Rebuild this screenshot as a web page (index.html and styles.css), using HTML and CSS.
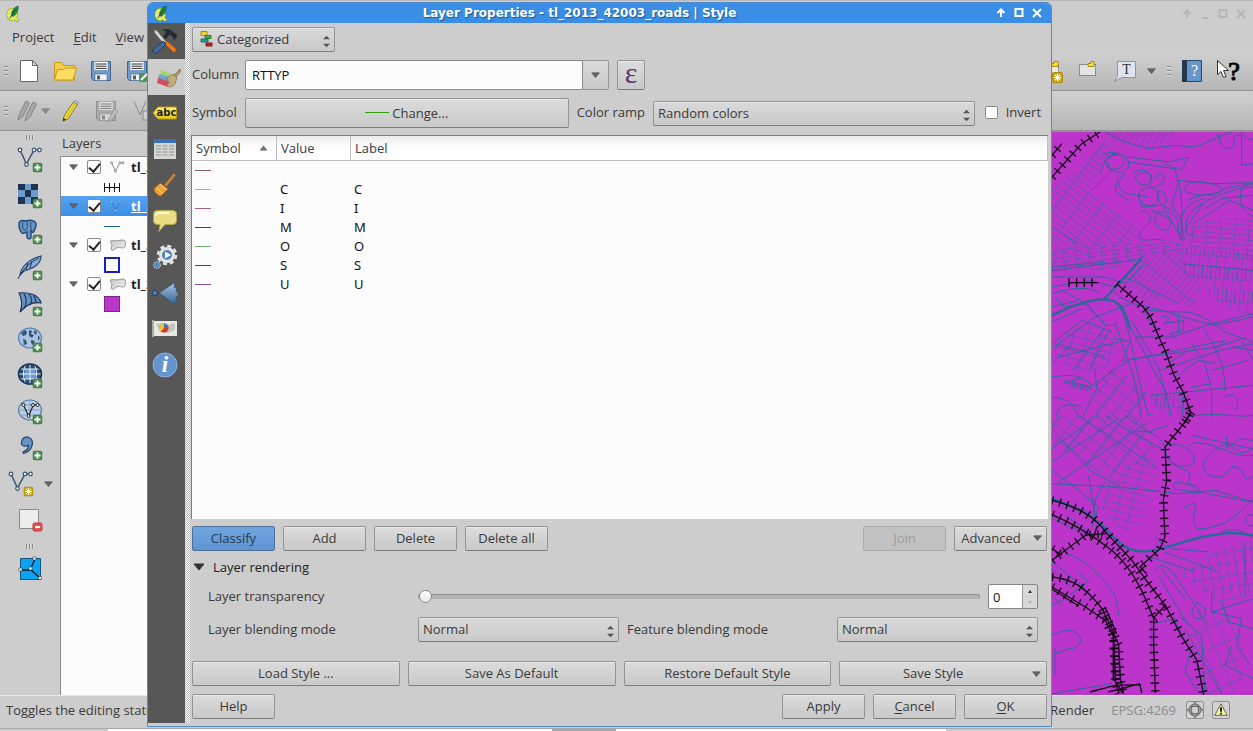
FILE: index.html
```html
<!DOCTYPE html>
<html lang="en">
<head>
<meta charset="utf-8">
<title>Layer Properties</title>
<link rel="stylesheet" href="styles.css">
</head>
<body>
<svg class="defs" aria-hidden="true">
  <defs>
    <linearGradient id="blueg" x1="0" y1="0" x2="0" y2="1"><stop offset="0" stop-color="#a9c8e8"/><stop offset="1" stop-color="#33618f"/></linearGradient>
    <linearGradient id="yel" x1="0" y1="0" x2="0" y2="1"><stop offset="0" stop-color="#fdf66a"/><stop offset="1" stop-color="#e3c51c"/></linearGradient>
    <linearGradient id="grey" x1="0" y1="0" x2="1" y2="1"><stop offset="0" stop-color="#c4c4c4"/><stop offset="1" stop-color="#f4f4f4"/></linearGradient>
    <symbol id="plus" viewBox="0 0 10 10"><rect x=".5" y=".5" width="9" height="9" rx="1.5" fill="#4f8f51" stroke="#3f7741"/><path d="M5 2v6M2 5h6" stroke="#fff" stroke-width="1.8"/></symbol>
    <symbol id="star" viewBox="0 0 10 10"><rect x=".5" y=".5" width="9" height="9" rx="1.5" fill="#cfa819" stroke="#a98a12"/><path d="M5 1.6v6.8M1.6 5h6.8M2.6 2.6l4.8 4.8M7.4 2.6L2.6 7.4" stroke="#fff" stroke-width="1"/></symbol>
    <symbol id="vee" viewBox="0 0 26 22"><path d="M3 3l6.500 14L17 3h5" fill="none" stroke="currentColor" stroke-width="1.500"/><g fill="#e8eef4" stroke="currentColor" stroke-width="1.200"><circle cx="3" cy="3" r="1.800"/><circle cx="9.500" cy="17.500" r="1.800"/><circle cx="17" cy="3" r="1.800"/><circle cx="22.500" cy="3" r="1.800"/></g></symbol>
    <symbol id="poly" viewBox="0 0 18 14"><path d="M2 2c2-1 3 0 6 0s7-2 9 0 0 4 0 6c-1 3-4 1-7 1s-5 4-7 3 0-3 0-5-3-4-1-5z" fill="url(#grey)" stroke="#8c8c8c"/></symbol>
    <symbol id="q" viewBox="0 0 16 18"><ellipse cx="6.500" cy="10" rx="4" ry="5" fill="none" stroke="#7d9a2a" stroke-width="4"/><path d="M8 12l5 5" stroke="#7d9a2a" stroke-width="3.500"/><ellipse cx="6.500" cy="10" rx="4" ry="5" fill="#cfdcae" stroke="#e2ef55" stroke-width="2.800"/><path d="M8 12l4.500 4.500" stroke="#e2ef55" stroke-width="2.500"/><path d="M6 11C6 6 8 3 13 1c0 5-1 8-5 11z" fill="#2a8a45" stroke="#124f26" stroke-width=".7"/><path d="M4 14l7-10" stroke="#124f26" stroke-width="1"/></symbol>
    <symbol id="tri" viewBox="0 0 10 7"><path d="M.5 1h9L5 6.500z" fill="#666" stroke="#4c4c4c" stroke-width=".8"/></symbol>
    <symbol id="updown" viewBox="0 0 8 14"><path d="M0 4.500L4 .5l4 4zM0 9.500L4 13.500l4-4z" fill="#555"/></symbol>
    <symbol id="floppy" viewBox="0 0 24 24"><path d="M2.500 2.500h19v19h-17l-2-2z" fill="#6f9acb" stroke="#3f648e"/><rect x="5" y="2.500" width="14" height="9" fill="#fafafa" stroke="#5b7fa8" stroke-width=".6"/><path d="M6.500 5h11M6.500 7.200h11M6.500 9.400h11" stroke="#333" stroke-width="1"/><rect x="6" y="15" width="12" height="6.500" fill="#f2f2f2" stroke="#49688c" stroke-width=".6"/><rect x="8" y="16.500" width="3" height="4" fill="#4d5a68"/></symbol>
    <symbol id="globe" viewBox="0 0 26 22"><ellipse cx="13" cy="11" rx="11.500" ry="10" fill="currentColor" stroke="#5480ae" stroke-width="1.200"/></symbol>
  </defs>
</svg>

<div class="main-window">
  <header class="main-title">
    <svg class="logo"><use href="#q"/></svg>
    <span class="grow"></span>
    <svg class="winbtns faded" viewBox="0 0 72 18"><path d="M9 13V6M5.500 9L9 5.500 12.500 9" /><path d="M24 13h6"/><rect x="41.500" y="5" width="7" height="7"/><path d="M59 5l8 8M67 5l-8 8"/></svg>
  </header>
  <nav class="menubar">
    <a href="#">Pro<u>j</u>ect</a><a href="#"><u>E</u>dit</a><a href="#"><u>V</u>iew</a>
  </nav>
  <div class="toolbar">
    <span class="grip"></span>
    <button class="tool" aria-label="New project"><svg viewBox="0 0 24 24"><path d="M3.500 1.500h12l5 5v16h-17z" fill="#fff" stroke="#666"/><path d="M15.500 1.500v5h5z" fill="#ddd" stroke="#666"/></svg></button>
    <button class="tool" aria-label="Open project"><svg viewBox="0 0 24 24"><path d="M1.500 21V3.500h7l2 3h11V21z" fill="#f4cf4c" stroke="#c99a18"/><path d="M1.500 21L4.500 10.500h6l2-1.500h11L20 21z" fill="#ffdc62" stroke="#c99a18"/></svg></button>
    <button class="tool" aria-label="Save project"><svg viewBox="0 0 24 24"><use href="#floppy"/></svg></button>
    <button class="tool" aria-label="Save project as"><svg viewBox="0 0 24 24"><use href="#floppy"/><rect x="14" y="14" width="9" height="9" rx="1" fill="#4f8f61"/><path d="M16 21l6-6" stroke="#fff" stroke-width="2"/></svg></button>
    <span class="grow"></span>
    <button class="tool" aria-label="New bookmark"><svg viewBox="0 0 24 24"><path d="M2.500 5.500h15v13h-15z" fill="#e8e8e8" stroke="#555" stroke-dasharray="1 1"/><path d="M13 2.500h4v5h-6v-3h2z" fill="#f6e23a" stroke="#a98a12"/><use href="#star" x="11" y="13" width="11" height="11"/></svg></button>
    <button class="tool" aria-label="Show bookmarks"><svg viewBox="0 0 24 24"><path d="M2.500 5.500h16v11h-16z" fill="#e4e4e4" stroke="#444" stroke-dasharray="1 1"/><path d="M14 2.500h3v5h-6v-3h3z" fill="#f6e23a" stroke="#a98a12"/></svg></button>
    <button class="tool" aria-label="Text annotation"><svg viewBox="0 0 24 24"><path d="M4.500 2.500h18v16H9l-8 4 3.500-5z" fill="#dde6ee" stroke="#8797a6"/><text x="13.500" y="15" class="annot">T</text></svg></button>
    <button class="arrow" aria-label="More annotations"><svg class="small"><use href="#tri"/></svg></button>
    <span class="grip"></span>
    <button class="tool" aria-label="Help contents"><svg viewBox="0 0 24 24"><path d="M2.500 1.500h19v21h-19z" fill="#6596cc" stroke="#2c4767"/><path d="M2 1h5v22H2z" fill="#24374d"/><text x="14.500" y="17" class="bookq">?</text></svg></button>
    <button class="tool whats" aria-label="What's this"><svg viewBox="0 0 24 24"><path d="M1.500 1.500v14l3.500-3 2.500 6 2.500-1-2.500-6h5z" fill="#fff" stroke="#333"/><text x="18" y="21" class="whatq">?</text></svg></button>
  </div>
  <div class="toolbar">
    <span class="grip"></span>
    <button class="tool wide" aria-label="Current edits"><svg viewBox="0 0 24 24"><g fill="#a8a8a8" stroke="#848484"><path d="M2 21l1.500-6L10 2l3.500 2L7 17z"/><path d="M9 22l1.500-6L17 3l3.500 2L14 18z"/></g></svg><svg class="dim small"><use href="#tri"/></svg></button>
    <button class="tool" aria-label="Toggle editing"><svg viewBox="0 0 24 24"><path d="M5 22l1-5 9.500-14 4 2.500L10 20z" fill="#f2dc3d" stroke="#8b7a1c"/><path d="M8 18.500L17.500 4.500" stroke="#c2ab22"/><path d="M15.500 3l4 2.500 1-2.500-3-1.500z" fill="#ccc" stroke="#777" stroke-width=".7"/><path d="M5 22l.5-3 2.500 1.500z" fill="#222"/></svg></button>
    <button class="tool" aria-label="Save layer edits"><svg class="washed" viewBox="0 0 24 24"><use href="#floppy"/><path d="M14 23l1-4 6-9 3 2-6 9z" fill="#bbb" stroke="#777"/></svg></button>
    <button class="tool" aria-label="Add feature"><svg class="washed" viewBox="0 0 24 24"><path d="M4 2l6 14 6-14" fill="none" stroke="#555"/><rect x="13" y="12" width="8" height="9" fill="#ddd" stroke="#555"/></svg></button>
  </div>

  <div class="workspace">
    <aside class="side-tools">
      <span class="grip flat"></span>
      <button class="vtool" aria-label="Add vector layer"><svg viewBox="0 0 26 26"><use href="#vee" width="26" height="22"/><use href="#plus" x="15.500" y="15.500" width="10" height="10"/></svg></button>
      <button class="vtool" aria-label="Add raster layer"><svg viewBox="0 0 26 26"><path d="M1 1h20v20H1z" fill="#6c9bcd"/><path d="M1 1h7v6H1zM14 1h7v6h-7zM8 7h6v7H8zM1 14h7v7H1zM14 14h7v7h-7z" fill="#1d3552"/><use href="#plus" x="15.500" y="15.500" width="10" height="10"/></svg></button>
      <button class="vtool" aria-label="Add PostGIS layer"><svg viewBox="0 0 26 26"><path d="M2 5c0-4 4-4 7-3 3-1 5-1 7 0 3 0 4 3 2 8-1 3-2 4-3 3l-1-2v7c0 3-4 2-4 0v-5c-3 1-4 2-5 1C3 12 2 8 2 5z" fill="#6794c6" stroke="#24486f" stroke-width="1.400"/><path d="M6 3c-1 4 0 8 2 8s3-3 2-8M14 3c-1 3 0 6 1 8" fill="none" stroke="#24486f"/><use href="#plus" x="15.500" y="15.500" width="10" height="10"/></svg></button>
      <button class="vtool" aria-label="Add SpatiaLite layer"><svg viewBox="0 0 26 26"><path d="M3 20C4 12 12 4 24 1c0 7-6 12-17 15z" fill="#87aedb" stroke="#24486f" stroke-width="1.200"/><path d="M1 24C6 14 13 7 22 3M9 15l2-7M13 13l2-7" fill="none" stroke="#1d3552"/><use href="#plus" x="15.500" y="15.500" width="10" height="10"/></svg></button>
      <button class="vtool" aria-label="Add MSSQL layer"><svg viewBox="0 0 26 26"><path d="M2 2c8-1 20 1 22 10-6-1-14 1-21 9 3-7 2-13-1-19z" fill="#6794c6" stroke="#1d3552" stroke-width="1.200"/><path d="M7 2.500c3 5 3 10 0 15M12 3c3 4 3 8 1 11M17 5c2 3 2 5 2 7" fill="none" stroke="#1d3552" stroke-width="1.200"/><use href="#plus" x="15.500" y="15.500" width="10" height="10"/></svg></button>
      <button class="vtool" aria-label="Add WMS layer"><svg viewBox="0 0 26 26"><g color="#a8c3e2"><use href="#globe" width="26" height="22"/></g><path d="M4 6l4-3 2 2-1 3-3 1zM12 3l3 1-1 3 3 1-2 3-3-2zM17 3l3 2-1 3-2-2zM6 12l3 1 1 4-3 1zM14 13l4 1-2 4-2-2zM21 8l2 3-2 3z" fill="#35557c"/><use href="#plus" x="15.500" y="15.500" width="10" height="10"/></svg></button>
      <button class="vtool" aria-label="Add WCS layer"><svg viewBox="0 0 26 26"><g color="#27496f"><use href="#globe" width="26" height="22"/></g><path d="M8 6h10l1 5-1 5H8l-1-5z" fill="#6c9bcd"/><path d="M3 6h20M2 11h22M3 16h20M9 1.500C5.500 7 5.500 15 9 20.500M17 1.500c3.500 5.500 3.500 13.500 0 19M13 1v20" fill="none" stroke="#e9f1f9"/><ellipse cx="13" cy="11" rx="11.500" ry="10" fill="none" stroke="#1d3552" stroke-width="1.500"/><use href="#plus" x="15.500" y="15.500" width="10" height="10"/></svg></button>
      <button class="vtool" aria-label="Add WFS layer"><svg viewBox="0 0 26 26"><g color="#bdcfe2"><use href="#globe" width="26" height="22"/></g><path d="M3 6h20M2 11h22M3 16h20M13 1v20" stroke="#7fa3ca" fill="none"/><path d="M6.500 6l5 11 5-11h4" fill="none" stroke="#222" stroke-width="1.200"/><g fill="#fff" stroke="#222"><circle cx="6.500" cy="6" r="1.500"/><circle cx="11.500" cy="17" r="1.500"/><circle cx="16" cy="6" r="1.500"/><circle cx="20.500" cy="6" r="1.500"/></g><use href="#plus" x="15.500" y="15.500" width="10" height="10"/></svg></button>
      <button class="vtool" aria-label="Add delimited text layer"><svg viewBox="0 0 26 26"><path d="M10 11C5 12 4 9 4.500 6.500 5 3 9 1 12 2.500c6 3 4 13-5.500 16l-.5-1.500c4-2 6-4 5.500-7z" fill="#6794c6" stroke="#24486f" stroke-width="1.200"/><use href="#plus" x="15.500" y="15.500" width="10" height="10"/></svg></button>
      <span class="vrow"><button class="vtool" aria-label="New vector layer"><svg viewBox="0 0 26 26"><use href="#vee" width="26" height="22"/><use href="#star" x="15.500" y="15.500" width="10" height="10"/></svg></button><svg class="small"><use href="#tri"/></svg></span>
      <button class="vtool" aria-label="Remove layer"><svg viewBox="0 0 26 26"><path d="M2.500 2.500h19v19h-19z" fill="#ededeb" stroke="#8a8a8a"/><rect x="16" y="16" width="9" height="8" rx="1.500" fill="#e05454" stroke="#c33"/><path d="M18 20h5" stroke="#fff" stroke-width="2"/></svg></button>
      <span class="grip flat low"></span>
      <button class="vtool" aria-label="Topology"><svg viewBox="0 0 26 26"><path d="M3.500 2.500h20v21h-20z" fill="#0aa5f2" stroke="#17527a"/><path d="M3 14h10L18 3M13 13l10 9" stroke="#111" stroke-width="1.300" fill="none"/><g fill="#fff" stroke="#333" stroke-width=".6"><path d="M2 12h3v3H2zM12 11h3v3h-3zM16 1h3v3h-3zM21.500 20.500h3v3h-3z"/></g></svg></button>
    </aside>

    <section class="layers">
      <h2>Layers</h2>
      <ul class="tree">
        <li class="layer"><svg class="small"><use href="#tri"/></svg><input type="checkbox" checked aria-label="Show rails layer"><svg class="ltype thin"><use href="#vee"/></svg><b>tl_2</b></li>
        <li class="legend"><svg viewBox="0 0 16 10"><path d="M0 5.500h16M.5 1v9M5.500 1v9M10.500 1v9M15.500 1v9" stroke="#111" fill="none"/></svg></li>
        <li class="layer selected"><svg class="small"><use href="#tri"/></svg><input type="checkbox" checked aria-label="Show roads layer"><svg class="ltype thin sel"><use href="#vee"/></svg><b>tl_2</b></li>
        <li class="legend"><svg viewBox="0 0 16 10"><path d="M0 5.500h16" stroke="#1f6a96"/></svg></li>
        <li class="layer"><svg class="small"><use href="#tri"/></svg><input type="checkbox" checked aria-label="Show outline layer"><svg class="ltype"><use href="#poly"/></svg><b>tl_2</b></li>
        <li class="legend"><i class="swatch outline"></i></li>
        <li class="layer"><svg class="small"><use href="#tri"/></svg><input type="checkbox" checked aria-label="Show area layer"><svg class="ltype"><use href="#poly"/></svg><b>tl_2</b></li>
        <li class="legend"><i class="swatch fill"></i></li>
      </ul>
    </section>

    <div class="map">
      <svg viewBox="0 0 603 1692" preserveAspectRatio="xMaxYMin slice" role="img" aria-label="Map of roads and railways">
        <defs>
          <pattern id="g1" width="54" height="18" patternUnits="userSpaceOnUse" patternTransform="rotate(37)"><path d="M0 0h54M0 0v18" class="road"/></pattern>
          <pattern id="g2" width="17" height="60" patternUnits="userSpaceOnUse" patternTransform="rotate(28)"><path d="M0 0v60" class="road"/></pattern>
          <pattern id="g3" width="42" height="15" patternUnits="userSpaceOnUse" patternTransform="rotate(4)"><path d="M0 0h42M0 0v15" class="road"/></pattern>
          <pattern id="g4" width="26" height="66" patternUnits="userSpaceOnUse" patternTransform="rotate(5)"><path d="M0 0h26M0 0v66M13 30v36" class="road"/></pattern>
          <pattern id="g5" width="38" height="24" patternUnits="userSpaceOnUse" patternTransform="rotate(-8)"><path d="M0 0h38M0 0v24M0 12h19" class="road"/></pattern>
          <pattern id="g6" width="56" height="16" patternUnits="userSpaceOnUse" patternTransform="rotate(-50)"><path d="M0 0h56M0 0v16" class="road"/></pattern>
          <pattern id="g7" width="76" height="32" patternUnits="userSpaceOnUse" patternTransform="rotate(38)"><path d="M0 0h76M0 0v32M38 0v32" class="road"/></pattern>
          <pattern id="g8" width="40" height="22" patternUnits="userSpaceOnUse" patternTransform="rotate(15)"><path d="M0 0h40M0 0v22" class="road"/></pattern>
          <pattern id="g9" width="26" height="70" patternUnits="userSpaceOnUse" patternTransform="rotate(-9)"><path d="M0 0h26M0 0v70M0 35h13" class="road"/></pattern>
          <pattern id="g10" width="36" height="60" patternUnits="userSpaceOnUse" patternTransform="rotate(-24)"><path d="M0 0h36M0 0v60" class="road"/></pattern>
        </defs>
        <rect width="603" height="1692" fill="#bb35cb"/>
        <g transform="translate(-21 -5)">
          <path d="M21 165L100 120 180 30 210 40 130 180 250 270 300 330 180 345 21 350V310L100 330 21 270z" fill="url(#g1)"/>
          <path d="M205 5h190l-30 30-30 18-90-5-50-20z" fill="url(#g2)"/>
          <path d="M440 290l40-20 144-10v120l-190-25z" fill="url(#g3)"/>
          <path d="M408 350l216 20v190l-90-30-126-110z" fill="url(#g4)"/>
          <path d="M21 355l160-15 235-5-5 30-120 15-90 35-180 10z" fill="url(#g5)"/>
          <path d="M290 385l120-35 0 55 60 70-30 60-90-40-30 35-80-60z" fill="url(#g6)"/>
          <path d="M60 610l60-30 115 45-60 100-100-5-50-60z" fill="url(#g8)"/>
          <path d="M320 795h110v60h-90z" fill="url(#g4)"/>
          <path d="M145 770l60-60 110 80-50 75h-110z" fill="url(#g7)"/>
          <g class="road">
            <path d="M180 5l60 30 70 20 80-10 60 5 60-25 50-20M520 10c5 40 20 50 40 40s-10-30 20-35 20 20 44 10M590 5v100l34-5M170 75c20-15 60-10 75 10s0 45-30 40-40-30-20-45 50-5 40 20-50 20-45 0M245 80l130 15 55-15-20 40-50-20M250 95l140 20 10 45-20 60 30 50v60"/>
            <path d="M165 130c10-30 20-60 50-60M140 180l60-60M240 130c-30 30-20 50 10 60l60 10M265 130c20-20 50-10 55 10s-20 30-35 20-20-25 0-30 40 0 30 20M330 145c10-25 35-15 25 5s-30 30-45 10M290 180c-20 20-5 40 20 45s40-20 25-40-30-15-45-5M340 180c-10 30 10 50 20 40s0-40-20-40zM280 190l10 40 60-5 40 20M360 225c-20 30 40 10 40 60s20 40 15 50M320 240l60 30 30 60M280 250c20-20 40 0 35 20s-40 30-30 50 40 0 70 10M220 140l-10 40 40 30M340 245c30 0 50 30 30 50s-60-30-30-50"/>
            <path d="M400 150l110 10 114-3M400 150c20 60 0 130 20 180M420 180c0-20 20-30 50-25s80 15 55 30-100 10-105-5zM430 210c30-20 80-15 100-30s60-10 94-20M410 290c-10-50 30-80 70-85M425 310c-10-40 10-70 50-90l-50 70c-10 20 10 40 30 5M624 240l-70-30-110 70M480 235l50-30 94-10M600 160c-30 40-10 80 24 100M440 240c60-40 130-70 184-70"/>
            <path d="M21 290l80 50M21 410l160-15M21 420l250-30 30-15M21 440h160l60 20 60-60M200 480l90-100M205 480c10 20 40 30 60 40l90 20 40 15 110 30 119-25M21 470l110-20 80 20M21 490c60-20 110-20 140-5M21 575l90-40M60 485l70 40 50 60h30M30 500l30 30 60-10 60 60M21 530l80-20M240 440l160 80M410 400l214 20M310 540l80 5 40 0c60 15 80 40 110 60l84 30"/>
            <path d="M21 655L150 560l110-40M21 640l90-70 90 35M30 640l150 40M40 680l180-45M21 700l60-60M195 595l-60 120M180 590l-95 130M215 625l40 10-20 50-80 80M235 690l280-40 90-30M270 620h110l120-40 124-30M220 525c30 30 50 200 90 330l15-5M240 560l130 240M210 575c40 130 60 150 80 290M260 570l80 140 40 150M300 545l60 110M345 720l180-60 99-20M21 740c60-10 90-5 120 25l110-75 290-60M60 755l80 20M60 750l80 20M55 760l60-20M70 765l60 15"/>
            <path d="M21 800c40 5 60 10 80 60M35 860c0-50 70-40 75-25M115 855l40-80-5-60M315 795l309-30M350 560c20-10 30 15 5 20l60-10v30l-40 10 20 15M400 550v60M480 600c30 50 60 100 60 180M440 640l40 60 20 80M510 670c20-40 30-35 30-30M440 770l60-10M500 720l110-30M540 800c30-20 50 10 30 40M590 630l34 60M420 780l-10 85M500 780v80M430 860c80-20 150 5 194-5M560 650l64 10M370 700l60-40M390 740l70-50 50 10"/>
          </g>
          <path d="M21 555c50-25 110-50 160-48s60 40 75 90M175 510l115-125" class="highway"/>
          <g class="rail"><path d="M21 140L110 40 165 5M21 75l30-35M70 457h90M215 460l80 70 22 30 25 60 20 45 25 70 25 45 25 65-20 35"/></g>
          <g class="ties"><path d="M21 140L110 40 165 5M21 75l30-35M70 457h90M215 460l80 70 22 30 25 60 20 45 25 70 25 45 25 65-20 35"/></g>
        </g>
        <g transform="translate(-21 850)">
          <path d="M21 0h260l50 100-120 100-190-110z" fill="url(#g7)"/>
          <path d="M200 190l90-80 45 20-50 200-60 20-60-80z" fill="url(#g8)"/>
          <path d="M520 400l104-30v170l-110 20-110-80z" fill="url(#g9)"/>
          <path d="M440 600l90-40 60 140v136H480l-60-60z" fill="url(#g10)"/>
          <g class="road">
            <path d="M21 40l120 130 80 40M21 100L160 0M21 140L220 10M40 200L310 20M21 205l200 10 180 20 110-10 113 35M100 0l240 160M180 0l60 40 110 60M240 0l70 50 60-20M21 165l80 60 60 50-20 60M130 180l20 120M180 200c-20 30-40 60-30 110M270 50c40-10 80 10 90 50s20 60 70 50-10-80-70-60"/>
            <path d="M624 100c-60 40-50-40-110 0s-40 80 0 85 30-40 60-30 20 60 50 25M430 90c60-30 120 40 194 30M545 60v40l40-30 39 5M440 60l180 40M370 120c30 60 80 30 60 80l30 30 164 30M385 210c5-20 40 0 60 0s30 30 0 20-60 0-60-20zM415 280c80-60-10 70 60 60s90-30 149-90M624 300c-40-10-20 40 0 30M530 350c60-20 70 10 94 15M380 400l110 10M300 420l150 50M360 410l160 60M330 360l30 40"/>
            <path d="M330 470c10-30 40-20 60 10l100 150M340 480l90 150M350 460l70 90M450 560c40 10 40 50 10 50s-20-40 0-50M400 600l70 60 10 176M420 640l110 196M330 625l60-15M500 530v60l124-40M500 590l90 20-15 80 40 60M530 560l20 60 74 20M600 380v160M440 690l-20 80 40 60M560 690l-20 60 84 40"/>
            <path d="M60 415c60 10 120 80 150 125l12 60M21 440l100 80M21 460l60 60M100 470l30 30-60 40M21 540l30 30M21 660c60-30 80-5 85 10s-10 30-30 30-35 20-50 10M21 835l180-30M30 700v80M21 310l110 50M60 300l90 60M21 570l40-20"/>
            <path d="M320 610v110M205 650l5 150M385 600l50 110M30 255l90 30 60 50M225 745v60"/>
          </g>
          <path d="M21 250c80 30 120 50 160 90s60 70 120 68 100-30 180-45 90-10 143-3" class="highway"/>
          <g class="rail"><path d="M440-10l-20 30-60 75 5 100-10 60 5 110-15 35-60 55 20 20"/><path d="M21 255c80 20 130 50 165 100l75 80 50 70 50 65 50 95 45 70 20 105"/><path d="M21 298c90 40 130 70 170 100s70 70 100 130l35 80v80l5 145M325 608l38-40"/><path d="M21 435l100-75 60-5M21 400l30 20"/><path d="M21 485c60 5 100 30 150 95l30 60 20 50 5 100 10 45M21 515l100 60 60 40 25 50 5 130 10 40M21 522l80 50M180 575l35 80M205 650v140l30 45M135 830l75-20 75-2 5 25M190 830l95-25"/></g>
          <g class="ties"><path d="M440-10l-20 30-60 75 5 100-10 60 5 110-15 35-60 55 20 20"/><path d="M21 255c80 20 130 50 165 100l75 80 50 70 50 65 50 95 45 70 20 105"/><path d="M21 298c90 40 130 70 170 100s70 70 100 130l35 80v80l5 145M325 608l38-40"/><path d="M21 435l100-75 60-5M21 400l30 20"/><path d="M21 485c60 5 100 30 150 95l30 60 20 50 5 100 10 45M21 515l100 60 60 40 25 50 5 130 10 40"/><path d="M150 345l35 12 75 78 50 72M175 590l30 70 10 150"/></g>
        </g>
      </svg>
    </div>
  </div>

  <footer class="status">
    <span class="hint">Toggles the editing state</span>
    <span class="grow"></span>
    <span>Render</span>
    <span class="epsg">EPSG:4269</span>
    <button class="sbtn" aria-label="CRS status"><svg viewBox="0 0 18 18"><g fill="none" stroke="#6c6c6c" stroke-width="1.500"><circle cx="9" cy="9" r="6.500"/><rect x="5" y="5" width="8" height="8" rx="2"/></g><path d="M9 0v4M9 14v4M0 9h4M14 9h4" stroke="#888" stroke-width="3"/></svg></button>
    <button class="sbtn" aria-label="Messages"><svg viewBox="0 0 18 18"><path d="M9 2l7 13H2z" fill="#f7f3a4" stroke="#555"/><path d="M9 6v5M9 12v2" stroke="#111" stroke-width="2"/></svg></button>
  </footer>
</div>
<div class="desk-strip"><i></i><i class="w"></i><i class="g"></i><i class="w b"></i></div>

<div class="dialog" role="dialog" aria-labelledby="dlg-title">
  <header class="dlg-title">
    <svg class="logo"><use href="#q"/></svg>
    <h1 id="dlg-title">Layer Properties - tl_2013_42003_roads | Style</h1>
    <svg class="winbtns" viewBox="0 0 54 18"><path d="M9 13V6M5.500 9L9 5.500 12.500 9"/><rect x="23.500" y="5" width="7" height="7"/><path d="M41 5l8 8M49 5l-8 8"/></svg>
  </header>
  <div class="dlg-body">
    <nav class="tabs">
      <button aria-label="General"><svg viewBox="0 0 26 26"><path d="M2 2l3 1 9 11-2 2L3 5z" fill="#ddd" stroke="#888" stroke-width=".6"/><path d="M15 13l9 8c1 2-2 4-3 3l-8-8z" fill="#f0791c" stroke="#b4500b"/><path d="M10 2c5-2 9-1 11 2l4 2c0 3-1 5-3 6l-2-4-3-1-3 4-3-2 3-5c-1-1-2-2-4-2z" fill="#222c33"/><path d="M11 13l3 3-9 9c-2 1-5-1-4-3z" fill="#3f689c" stroke="#223f66"/></svg></button>
      <button class="on" aria-label="Style"><svg viewBox="0 0 26 26"><path d="M6 6l13 5-4 5L5 11z" fill="#a3d36c"/><path d="M4 10l14 4-3 5L3 15z" fill="#6aa5d4"/><path d="M3 14l13 4-3 5L2 19z" fill="#d34c5c"/><path d="M12 14l6-4 4 4-2 6c-3 4-6 3-9 2l3-3z" fill="#c0ab7d" stroke="#8c7a50" stroke-width=".8"/><path d="M19 11l6-6 1 2-5 6z" fill="#b49a68" stroke="#8c7a50"/></svg></button>
      <button aria-label="Labels"><svg viewBox="0 0 26 26"><path d="M1 13l5-6h17.500q1 0 1 1v10q0 1-1 1H6z" fill="url(#yel)" stroke="#b89b10"/><text x="14.500" y="16" class="abc">abc</text></svg></button>
      <button aria-label="Fields"><svg viewBox="0 0 26 26"><path d="M2 3h22v20H2z" fill="#d4d6d2"/><path d="M2 3h22v4H2z" fill="#3c73b8"/><path d="M4 10h18M4 13h18M4 16h18M4 19h18" stroke="#8f938c" stroke-width="1.200" stroke-dasharray="5 1.500"/></svg></button>
      <button aria-label="Rendering"><svg viewBox="0 0 26 26"><path d="M22 3l-8 10" stroke="#c9832b" stroke-width="2.800" stroke-linecap="round"/><path d="M8 11l8 6-7 7c-3 0-7-4-7-7z" fill="#efa33d" stroke="#a8661a"/><path d="M5 16l6 6M8 12l7 6" stroke="#ffd692"/></svg></button>
      <button aria-label="Display"><svg viewBox="0 0 26 26"><path d="M5 2.500h15q4.500 0 4.500 4v6q0 4-4.500 4h-7l-6 7 1-7H6q-4.500 0-4.500-4v-6q0-4 3.500-4z" fill="#e8dc84" stroke="#b5a84b"/><path d="M4 8q0-3 4-3h9" stroke="#fbf8d8" fill="none" stroke-width="1.800"/></svg></button>
      <button aria-label="Actions"><svg viewBox="0 0 26 26"><circle cx="15" cy="11" r="9" fill="none" stroke="#e4e6e8" stroke-width="2.500" stroke-dasharray="4 3.070"/><circle cx="15" cy="11" r="6.500" fill="#4e82bd" stroke="#e4e6e8" stroke-width="3"/><path d="M13 7.500l6 3.500-6 3.500z" fill="#fff"/><circle cx="5" cy="21" r="3.500" fill="#5f8cc0" stroke="#b8cbe0" stroke-dasharray="1.500 1"/></svg></button>
      <button aria-label="Joins"><svg viewBox="0 0 28 26"><path d="M8 13L24 2v5h2v5h2v5h-2v8h-2z" fill="url(#blueg)" stroke="#2a4b70" stroke-width=".6"/><circle cx="3" cy="13" r="3" fill="#4c7aab" stroke="#203a58"/></svg></button>
      <button aria-label="Diagrams"><svg viewBox="0 0 26 26"><path d="M1 5h24v15H1z" fill="#e8e8e2"/><path d="M0 4h2v17H0z" fill="#aaa"/><path d="M4 8l7-1 5 2 7-2v7l-7 3-8-1z" fill="#c3c6bd"/><circle cx="12" cy="12" r="4.500" fill="#d23a32"/><path d="M12 12V7.500a4.500 4.500 0 0 0-3 8z" fill="#f1c63c"/><path d="M12 12V7.500a4.500 4.500 0 0 1 4.500 4.500z" fill="#4676b4"/></svg></button>
      <button aria-label="Metadata"><svg viewBox="0 0 26 26"><circle cx="13" cy="13" r="12" fill="#6495d0" stroke="#8db3df"/><text x="13" y="20" class="info">i</text></svg></button>
    </nav>
    <div class="splitter"></div>
    <form class="panel" onsubmit="return false">
      <div class="row">
        <span class="select renderer"><svg class="cat" viewBox="0 0 14 16"><path d="M1 .500h6v4H1z" fill="#f2d43a" stroke="#a58c14"/><path d="M5 4.500h6v3H5z" fill="#4aa54c" stroke="#2b7a2d"/><path d="M1 8h7v3H1z" fill="#2a9c9c" stroke="#137070"/><path d="M6 12h6v3H6z" fill="#c22" stroke="#811"/></svg><select aria-label="Renderer"><option>Categorized</option></select><svg class="ud"><use href="#updown"/></svg></span>
      </div>
      <div class="row">
        <label class="lead" for="column">Column</label>
        <span class="combo"><input id="column" type="text" value="RTTYP"><button type="button" aria-label="Choose column"><svg><use href="#tri"/></svg></button></span>
        <button type="button" class="btn eps" aria-label="Expression">ε</button>
      </div>
      <div class="row">
        <label class="lead" for="change">Symbol</label>
        <button type="button" id="change" class="btn change"><i></i>Change...</button>
        <label for="ramp">Color ramp</label>
        <span class="select ramp"><select id="ramp"><option>Random colors</option></select><svg class="ud"><use href="#updown"/></svg></span>
        <label class="invert"><input type="checkbox">Invert</label>
      </div>
      <div class="table-wrap">
        <table>
          <thead><tr><th class="c1"><span>Symbol<svg viewBox="0 0 10 7"><path d="M1 6h8L5 1z" fill="#777" stroke="#555" stroke-width=".6"/></svg></span></th><th class="c2">Value</th><th>Label</th></tr></thead>
          <tbody>
            <tr><td><i class="s0"></i></td><td></td><td></td></tr>
            <tr><td><i class="s1"></i></td><td>C</td><td>C</td></tr>
            <tr><td><i class="s2"></i></td><td>I</td><td>I</td></tr>
            <tr><td><i class="s3"></i></td><td>M</td><td>M</td></tr>
            <tr><td><i class="s4"></i></td><td>O</td><td>O</td></tr>
            <tr><td><i class="s5"></i></td><td>S</td><td>S</td></tr>
            <tr><td><i class="s6"></i></td><td>U</td><td>U</td></tr>
          </tbody>
        </table>
      </div>
      <div class="row">
        <button type="button" class="btn std primary">Classify</button>
        <button type="button" class="btn std">Add</button>
        <button type="button" class="btn std">Delete</button>
        <button type="button" class="btn std">Delete all</button>
        <span class="grow"></span>
        <button type="button" class="btn std" disabled>Join</button>
        <button type="button" class="btn adv">Advanced<svg><use href="#tri"/></svg></button>
      </div>
      <fieldset class="rendering">
        <legend><svg viewBox="0 0 12 8"><path d="M1 1h10L6 7z" fill="#333" stroke="#333"/></svg>Layer rendering</legend>
        <div class="grid">
          <label for="transp">Layer transparency</label>
          <div class="row slider"><input id="transp" type="range" value="0"><span class="spin"><input type="text" value="0" aria-label="Transparency value"><svg viewBox="0 0 14 23"><path d="M0 11.500h14" stroke="#ccc"/><path d="M5 8l2-3 2 3z" fill="#333"/><path d="M5 16l2 3 2-3z" fill="#aaa"/></svg></span></div>
          <label for="lblend">Layer blending mode</label>
          <div class="row blend"><span class="select"><select id="lblend"><option>Normal</option></select><svg class="ud"><use href="#updown"/></svg></span><label for="fblend">Feature blending mode</label><span class="select"><select id="fblend"><option>Normal</option></select><svg class="ud"><use href="#updown"/></svg></span></div>
        </div>
      </fieldset>
      <div class="four">
        <button type="button" class="btn">Load Style ...</button>
        <button type="button" class="btn">Save As Default</button>
        <button type="button" class="btn">Restore Default Style</button>
        <button type="button" class="btn menu">Save Style<svg><use href="#tri"/></svg></button>
      </div>
      <div class="row">
        <button type="button" class="btn std">Help</button>
        <span class="grow"></span>
        <button type="button" class="btn std">Apply</button>
        <button type="button" class="btn std"><span><u>C</u>ancel</span></button>
        <button type="button" class="btn std"><span><u>O</u>K</span></button>
      </div>
    </form>
  </div>
</div>
</body>
</html>
```
FILE: styles.css
```css
* { box-sizing: border-box; }
body {
  margin: 0;
  height: 100vh;
  display: flex;
  flex-direction: column;
  overflow: hidden;
  background: #cdcdcd;
  color: #3a3a3a;
  font: 13px/18px "Open Sans", "Noto Sans", sans-serif;
}
button, input, select { font: inherit; color: inherit; }
button { padding: 0; border: 0; background: none; }
svg { display: block; flex: none; }
.defs { position: absolute; width: 0; height: 0; }
.grow { flex: 1; }
u { text-underline-offset: 2px; }

/* main window */
.main-window { flex: 1; min-height: 0; display: flex; flex-direction: column; border-top: 1px solid #b8b8b8; }
.main-title { display: flex; align-items: center; height: 25px; padding: 0 3px 0 6px; }
.logo { width: 15px; height: 17px; }
.winbtns { height: 18px; fill: none; stroke: #fff; stroke-width: 2; }
.faded { stroke: #b6b6b6; }
.menubar { display: flex; gap: 19px; height: 26px; padding: 2px 12px; }
.menubar a { color: inherit; text-decoration: none; }
.toolbar {
  display: flex;
  align-items: center;
  height: 39px;
  padding-right: 7px;
  background: linear-gradient(#d0d0d0, #b6b6b6);
  border-bottom: 1px solid #929292;
}
.toolbar + .toolbar { height: 40px; }
.grip { width: 11px; height: 10px; padding: 0 3px 0 4px; background: repeating-linear-gradient(#8a8a8a 0 1px, #dcdcdc 1px 2px, transparent 2px 4px) content-box; }
.grip.flat { width: 8px; height: 5px; padding: 0; margin: 3px 0 2px; background: repeating-linear-gradient(90deg, #8a8a8a 0 1px, #dcdcdc 1px 2px, transparent 2px 3px); }
.grip.low { margin: 6px 0 2px; }
.tool { display: flex; align-items: center; justify-content: center; width: 36px; height: 36px; }
.tool svg { width: 24px; height: 24px; }
.tool.wide { width: 41px; justify-content: flex-start; padding-left: 5px; gap: 1px; }
.tool .small, svg.small { width: 9px; height: 6px; }
.dim { opacity: .6; }
.washed { opacity: .5; filter: grayscale(1); }
.arrow { width: 20px; height: 36px; padding: 0 3px 0 0; display: grid; place-items: center; }
.annot, .bookq, .whatq { font-family: "Liberation Serif", serif; text-anchor: middle; fill: #333; font-size: 14px; }
.bookq { fill: #fff; font-size: 16px; }
.whatq { font-size: 26px; fill: #000; stroke: #000; stroke-width: 1; }
.whats svg { overflow: visible; }

.workspace { flex: 1; min-height: 0; display: flex; }
.side-tools { width: 60px; display: flex; flex-direction: column; align-items: center; padding-top: 1px; color: #3c556f; }
.vtool { display: grid; place-items: center; width: 36px; height: 36px; }
.vtool svg { width: 26px; height: 26px; }
.vrow { display: flex; align-items: center; gap: 5px; height: 36px; margin-right: 5px; }
.layers { width: 190px; display: flex; flex-direction: column; }
.layers h2 { margin: 0; height: 25px; padding: 3px 2px; font-size: 13px; font-weight: normal; }
.tree { flex: 1; margin: 0; padding: 0; list-style: none; background: #fcfcfc; border: solid #8c8c8c; border-width: 1px 0 0 1px; }
.layer { display: flex; align-items: center; height: 20px; padding-left: 8px; color: #222; }
.layer b { margin-left: 5px; }
.layer input, .invert input {
  appearance: none;
  flex: none;
  width: 14px;
  height: 14px;
  margin: 0;
  background: #fff;
  border: 1px solid #8a8a8a;
  border-radius: 2px;
}
.invert input { width: 13px; height: 13px; }
.layer input { margin: 0 8px 0 9px; display: grid; place-items: center; }
.layer input:checked::after { content: ""; width: 5px; height: 9px; margin-bottom: 3px; border: solid #222; border-width: 0 2px 2px 0; transform: rotate(40deg); }
.ltype { width: 17px; height: 13px; color: #777; }
.selected { background: linear-gradient(#55a4f3, #3a8ee6); color: #fff; }
.selected b { text-decoration: underline; }
.selected .sel { color: #3d76b3; }
.legend { height: 19px; padding-left: 43px; display: flex; align-items: center; }
.legend svg { width: 16px; height: 10px; }
.swatch { width: 16px; height: 16px; }
.outline { border: 2px solid #1c1cc8; background: #fff; }
.fill { border: 1px solid #7b2386; background: #bb35cb; }
.map { flex: 1; min-width: 0; display: flex; justify-content: flex-end; overflow: hidden; background: #bb35cb; border-top: 1px solid #929292; }
.map svg { width: 201px; height: 564px; }
.road { fill: none; stroke: #2f659b; stroke-width: 3; }
.highway { fill: none; stroke: #216c95; stroke-width: 7; }
.rail { fill: none; stroke: #160816; stroke-width: 4; }
.ties { fill: none; stroke: #160816; stroke-width: 26; stroke-dasharray: 4 19; }

.status { display: flex; align-items: center; height: 33px; padding: 0 23px 5px 6px; gap: 8px; border-top: 1px solid #e8e8e8; }
.epsg { color: #8c8c8c; margin: 0 2px 0 9px; }
.sbtn { width: 18px; height: 18px; border: 1px solid #8f8f8f; border-radius: 2px; background: #d2d2d2; }
.sbtn svg { width: 16px; height: 16px; }
.desk-strip { display: flex; height: 3px; border-top: 1px solid #a8a8a8; background: #ccc; }
.desk-strip i { width: 108px; }
.desk-strip .w { width: 444px; background: #fff; }
.desk-strip .g { width: 64px; background: #a8a8a8; }
.desk-strip .b { width: 330px; }

/* dialog window floating over the main window */
.dialog {
  position: absolute;
  top: 2px;
  bottom: 4px;
  left: 147px;
  right: 201px;
  display: flex;
  flex-direction: column;
  border: 1px solid #4f8ccb;
  border-radius: 6px 6px 0 0;
  background: #cdcdcd;
  overflow: hidden;
}
.dlg-title { display: flex; align-items: center; height: 20px; padding: 0 5px 0 6px; background: #3a8ee6; color: #fff; }
.dlg-title h1 { flex: 1; margin: 0; padding-right: 2px; text-align: center; font: bold 12px/20px "DejaVu Sans", sans-serif; text-shadow: 1px 1px 1px #1c5693; }
.dlg-body { flex: 1; min-height: 0; display: flex; padding-bottom: 3px; }
.tabs { width: 37px; display: flex; flex-direction: column; background: #575757; }
.tabs button { height: 36px; padding-right: 3px; display: grid; place-items: center; }
.tabs svg { width: 26px; height: 26px; }
.tabs .on { background: #cdcdcd; padding: 0 0 0 3px; }
.abc { font: bold 10px "DejaVu Sans", sans-serif; text-anchor: middle; fill: #222; }
.info { font: italic bold 23px "Liberation Serif", serif; text-anchor: middle; fill: #fff; }
.splitter { width: 5px; background: repeating-conic-gradient(#f4f4f4 0 25%, #c0c0c0 0 50%) 0 0 / 2px 2px; }
.panel { flex: 1; min-width: 0; display: flex; flex-direction: column; gap: 8px; margin: 0; padding: 4px 4px 4px 2px; }
.row { display: flex; align-items: center; gap: 8px; }
.row > label, .grid > label { padding-bottom: 2px; }
.btn {
  display: flex;
  align-items: center;
  justify-content: center;
  height: 25px;
  padding: 0 0 1px;
  border: 1px solid #949494;
  border-bottom-color: #7d7d7d;
  border-radius: 2px;
  background: linear-gradient(#dcdcdc, #c9c9c9);
  box-shadow: inset 0 1px #e9e9e9;
}
.std { width: 83px; }
.adv { width: 93px; gap: 12px; padding-left: 2px; }
.btn svg, .combo svg { width: 9px; height: 6px; }
.primary { background: linear-gradient(#70a5de, #5c94d3); border-color: #4d7099; box-shadow: none; color: #27384d; }
.btn:disabled { color: #9c9c9c; background: #c2c2c2; border-color: #acacac; box-shadow: none; }
.select { position: relative; display: flex; height: 25px; }
.select select {
  appearance: none;
  width: 100%;
  padding: 0 24px 1px 4px;
  border: 1px solid #949494;
  border-bottom-color: #7d7d7d;
  border-radius: 2px;
  background: linear-gradient(#dadada, #c9c9c9);
  box-shadow: inset 0 1px #e6e6e6;
}
.ud { position: absolute; right: 5px; top: 8px; width: 7px; height: 13px; }
.renderer { width: 143px; }
.renderer select { padding-left: 24px; }
.cat { position: absolute; left: 8px; top: 4px; width: 14px; height: 16px; }
.lead { width: 45px; }
.combo { display: flex; width: 364px; height: 30px; }
.combo input { flex: 1; min-width: 0; padding: 0 6px; border: 1px solid #8a8a8a; border-radius: 2px 0 0 2px; background: #fcfcfc; color: #111; }
.combo button { width: 26px; display: grid; place-items: center; border: 1px solid #949494; border-left: 0; border-radius: 0 2px 2px 0; background: linear-gradient(#dadada, #c9c9c9); }
.eps { width: 28px; height: 30px; color: #5b3a66; font: 30px/20px "Liberation Serif", serif; padding-bottom: 4px; }
.change { flex: 1; height: 30px; gap: 3px; }
.change i { width: 24px; height: 1px; background: #33a20c; }
.ramp { flex: 1; }
.invert { display: flex; align-items: center; gap: 8px; padding-left: 2px; padding-right: 6px; }
.table-wrap { flex: 1; margin: -1px -1px -1px; background: #fcfcfc; border: solid #7d7d7d; border-width: 1px 0 0 1px; }
table { width: 100%; border-collapse: separate; border-spacing: 0; table-layout: fixed; }
th { height: 25px; padding: 0 4px 1px; font-weight: normal; text-align: left; background: linear-gradient(#ececec, #fff 50%); border: solid #c0c0c0; border-width: 0 1px 1px 0; }
th span { display: flex; align-items: center; justify-content: space-between; padding-right: 4px; }
th svg { width: 9px; height: 6px; }
.c1 { width: 85px; }
.c2 { width: 74px; }
td { height: 19px; padding: 0 3px; line-height: 19px; color: #111; font-family: "Noto Sans", sans-serif; }
td i { display: block; width: 16px; height: 1px; }
.s0 { background: #8a5a68; }
.s1 { background: #4fd6cf; }
.s2 { background: #a561a0; }
.s3 { background: #7b1c7a; }
.s4 { background: #69b36c; }
.s5 { background: #7d2a45; }
.s6 { background: #8b54a8; }
.rendering { margin: -1px 0 11px; padding: 0 9px 0 16px; border: 0; min-width: 0; }
.rendering legend { display: flex; align-items: center; gap: 8px; margin-left: -15px; padding: 0; height: 18px; color: #222; }
.rendering legend svg { width: 12px; height: 8px; }
.grid { display: grid; grid-template-columns: 210px 1fr; row-gap: 8px; align-items: center; padding-top: 8px; }
.slider input[type=range] { appearance: none; flex: 1; min-width: 0; height: 15px; margin: 0; background: none; }
.slider input::-webkit-slider-runnable-track { height: 5px; border: 1px solid #8f8f8f; border-bottom-color: #b5b5b5; border-radius: 3px; background: #b4b4b4; }
.slider input::-webkit-slider-thumb { appearance: none; width: 13px; height: 13px; margin: -5px 0 0; border: 1px solid #888; border-radius: 50%; background: linear-gradient(#fff, #e8e8e8); }
.spin { display: flex; width: 50px; height: 25px; border: 1px solid #858585; border-radius: 2px; overflow: hidden; background: #d8d8d8; }
.spin input { flex: 1; min-width: 0; padding: 0 4px; border: 0; border-right: 1px solid #999; background: #fff; color: #111; }
.spin svg { width: 14px; height: 23px; }
.blend .select { flex: 1; }
.blend label { width: 202px; }
.four { display: grid; grid-template-columns: repeat(4, 1fr); gap: 8px; }
.menu { position: relative; padding-right: 20px; }
.menu svg { position: absolute; right: 5px; top: 9px; }
```
